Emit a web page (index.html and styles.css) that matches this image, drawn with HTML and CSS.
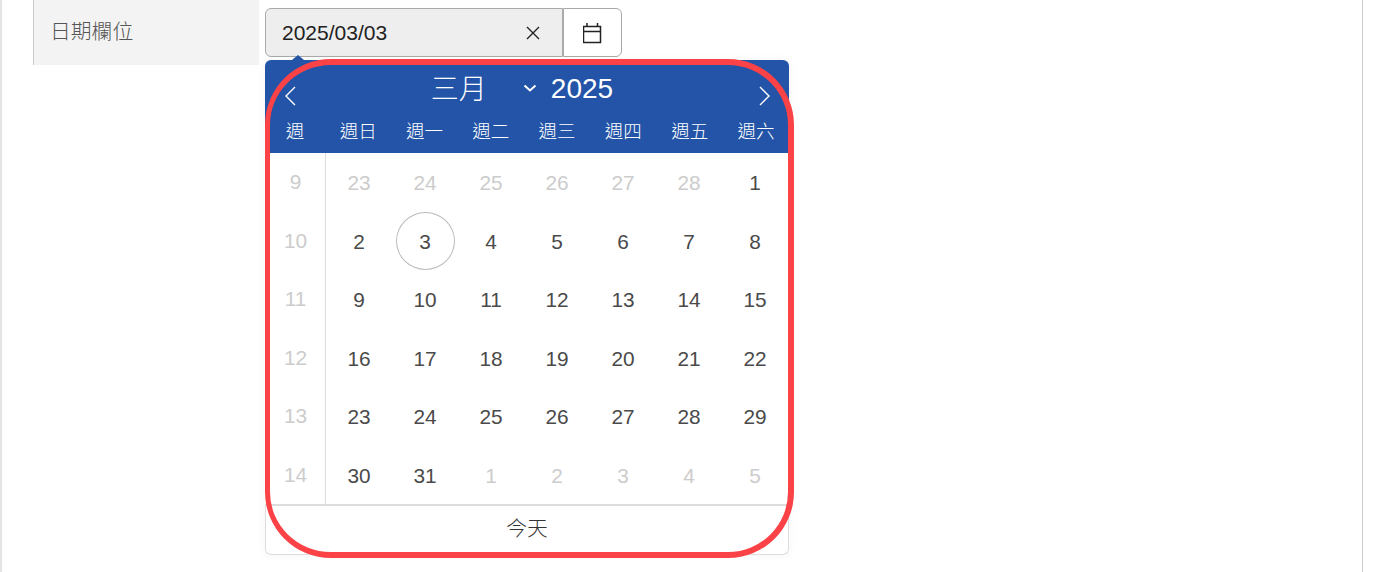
FILE: index.html
```html
<!DOCTYPE html>
<html lang="en">
<head>
  <meta charset="UTF-8">
  <title>日期欄位</title>
  <link rel="stylesheet" href="styles.css">
</head>
<body>

<div class="page">
  <div class="form-row">
    <div class="form-label">日期欄位</div>
    <div class="form-field">
      <div class="date-input">
        <div class="date-value">
          <span>2025/03/03</span>
          <svg class="clear-icon" viewBox="0 0 14 14" width="14" height="14"><path d="M1 1l12 12M13 1L1 13"/></svg>
        </div>
        <div class="date-toggle">
          <svg class="cal-icon" viewBox="1 0 20 22" width="20" height="22"><path d="M1.500 4.500h17v16h-17zM1.500 9.500h17M5 1v3.500M15.500 1v3.500"/></svg>
        </div>
      </div>

      <div class="calendar">
        <div class="cal-arrow"></div>
        <div class="cal-head">
          <div class="cal-title">
            <svg class="nav-icon" viewBox="0 0 12 20" width="12" height="20"><path d="M11 1L2 10l9 9"/></svg>
            <div class="month-year">
              <span class="month">三月</span>
              <svg class="chevron" viewBox="0 0 14 8" width="14" height="8"><path d="M1.500 1.500L7 6.500l5.500-5"/></svg>
              <span class="year">2025</span>
            </div>
            <svg class="nav-icon" viewBox="0 0 12 20" width="12" height="20"><path d="M1 1l9 9-9 9"/></svg>
          </div>
          <div class="cal-weekdays">
            <span>週</span><span>週日</span><span>週一</span><span>週二</span><span>週三</span><span>週四</span><span>週五</span><span>週六</span>
          </div>
        </div>
        <div class="cal-body">
          <div class="cal-weeks">
            <span>9</span><span>10</span><span>11</span><span>12</span><span>13</span><span>14</span>
          </div>
          <div class="cal-days">
            <span class="muted">23</span><span class="muted">24</span><span class="muted">25</span><span class="muted">26</span><span class="muted">27</span><span class="muted">28</span><span>1</span>
            <span>2</span><span class="selected">3</span><span>4</span><span>5</span><span>6</span><span>7</span><span>8</span>
            <span>9</span><span>10</span><span>11</span><span>12</span><span>13</span><span>14</span><span>15</span>
            <span>16</span><span>17</span><span>18</span><span>19</span><span>20</span><span>21</span><span>22</span>
            <span>23</span><span>24</span><span>25</span><span>26</span><span>27</span><span>28</span><span>29</span>
            <span>30</span><span>31</span><span class="muted">1</span><span class="muted">2</span><span class="muted">3</span><span class="muted">4</span><span class="muted">5</span>
          </div>
        </div>
        <div class="cal-foot">今天</div>
        <div class="highlight"></div>
      </div>
    </div>
  </div>
</div>

</body>
</html>
```

FILE: styles.css
```css
* { box-sizing: border-box; }
body {
  margin: 0;
  height: 572px;
  overflow: hidden;
  background-color: #fff;
  color: #4a4a4a;
  font-family: "Liberation Sans", "Noto Sans CJK TC", sans-serif;
  font-size: 20.8px;
}
.page {
  width: 1363px;
  height: 572px;
  padding-left: 31px;
  border-left: 2px solid #e4e4e4;
  border-right: 1px solid #ccc;
}
.form-row { display: flex; }
.form-label {
  width: 226px;
  height: 65px;
  padding: 16px 0 0 16px;
  background-color: #f3f3f3;
  border-left: 1px solid #ccc;
  line-height: 31px;
  font-weight: 300;
  color: #555;
}
.form-field {
  position: relative;
  padding: 8px 0 0 6px;
}
.date-input {
  display: flex;
  width: 357px;
  height: 49px;
}
.date-value {
  display: flex;
  align-items: center;
  justify-content: space-between;
  width: 298px;
  padding: 0 22px 0 16px;
  background-color: #eee;
  border: 1px solid #aaa;
  border-radius: 6px 0 0 6px;
  color: #222;
  font-size: 21px;
}
.clear-icon path {
  fill: none;
  stroke: #222;
  stroke-width: 1.4;
}
.date-toggle {
  display: flex;
  align-items: center;
  justify-content: center;
  flex: 1;
  border: 1px solid #aaa;
  border-radius: 0 6px 6px 0;
}
.cal-icon path {
  fill: none;
  stroke: #222;
  stroke-width: 1.5;
}
.calendar {
  position: absolute;
  left: 6px;
  top: 60px;
  width: 524px;
  height: 495px;
  background-color: #fff;
  border-radius: 6px;
  box-shadow: 0 0 10px rgba(0, 0, 0, .05);
}
.cal-arrow {
  position: absolute;
  left: 27px;
  top: -5px;
  border-left: 6px solid transparent;
  border-right: 6px solid transparent;
  border-bottom: 5px solid #2354a7;
}
.cal-head {
  height: 93px;
  background-color: #2354a7;
  border-radius: 6px 6px 0 0;
  color: #fff;
}
.cal-title {
  display: flex;
  justify-content: space-between;
  height: 52px;
  padding: 26px 18px 0 19px;
}
.nav-icon path {
  fill: none;
  stroke: #fff;
  stroke-width: 1.4;
}
.month-year {
  display: flex;
  align-items: center;
  height: 0;
  margin-top: 3px;
  margin-right: 11px;
}
.month {
  width: 92px;
  margin-top: -5px;
  font-size: 28px;
  font-weight: 300;
}
.chevron {
  margin-right: 14px;
  margin-top: -2px;
}
.chevron path {
  fill: none;
  stroke: #fff;
  stroke-width: 2;
}
.year { font-size: 28px; }
.cal-weekdays {
  display: grid;
  grid-template-columns: 60px repeat(7, 66.3px);
  font-size: 18.5px;
  font-weight: 300;
  line-height: 40px;
  text-align: center;
}
.cal-body {
  display: flex;
  height: 353px;
  border-bottom: 2px solid #ddd;
}
.cal-weeks {
  display: grid;
  grid-template-rows: repeat(6, 1fr);
  width: 61px;
  padding-left: 1px;
  border-right: 1px solid #ddd;
  color: #ccc;
}
.cal-weeks span, .cal-days span {
  display: flex;
  align-items: center;
  justify-content: center;
}
.cal-days {
  display: grid;
  grid-template-columns: repeat(7, 66px);
  grid-template-rows: repeat(6, 1fr);
}
.cal-days span { padding-top: 2px; }
.cal-days .muted { color: #ccc; }
.cal-days .selected {
  width: 59px;
  height: 58px;
  margin: auto;
  border: 1px solid #bbb;
  border-radius: 50%;
}
.cal-foot {
  height: 49px;
  border: 1px solid #ddd;
  border-top: none;
  border-radius: 0 0 6px 6px;
  font-weight: 300;
  line-height: 46px;
  text-align: center;
  color: #333;
}
.highlight {
  position: absolute;
  left: 0;
  top: -1px;
  width: 529px;
  height: 499px;
  border: 6px solid #fb4347;
  border-left-width: 5px;
  border-radius: 66px;
}
```
